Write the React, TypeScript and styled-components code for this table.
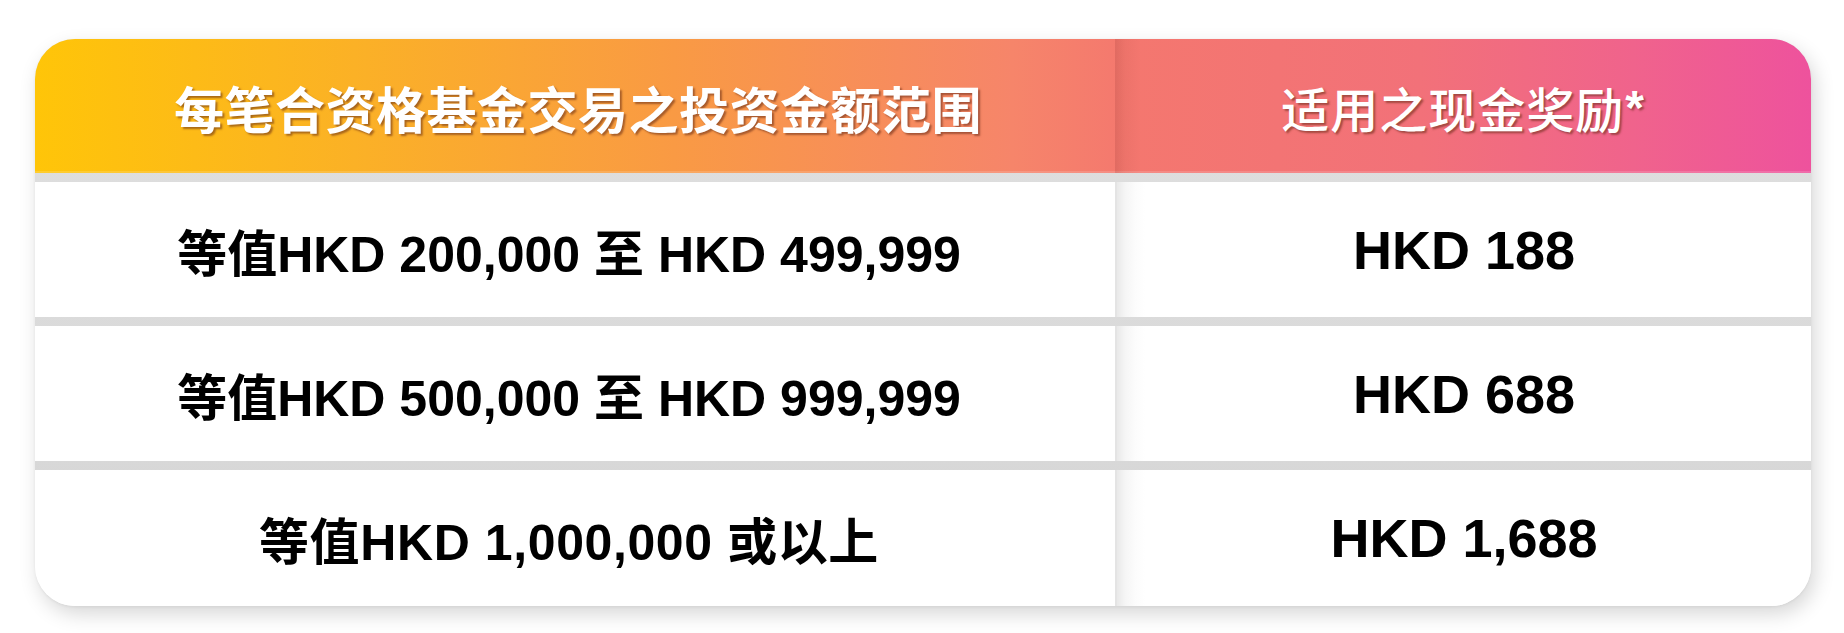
import React from 'react';
import { createGlobalStyle, styled } from 'styled-components';

const GlobalStyle = createGlobalStyle`
  html, body {
    margin: 0;
    padding: 0;
    background: #ffffff;
  }
  body {
    font-family: 'Liberation Sans', 'Noto Sans CJK SC', sans-serif;
  }
`;

const Page = styled.div`
  padding: 39px 33px 27px 35px;
`;

const Card = styled.div`
  width: 1776px;
  display: flex;
  flex-direction: column;
  gap: 9px;
  border-radius: 40px;
  overflow: hidden;
  background: linear-gradient(180deg, #e0e0e0 0%, #d5d5d5 100%);
  box-shadow: 4px 8px 20px rgba(0, 0, 0, 0.16), 0 1px 3px rgba(0, 0, 0, 0.06);
`;

const HeaderRow = styled.div`
  display: grid;
  grid-template-columns: 1080px 696px;
  height: 134px;
  background: linear-gradient(
    90deg,
    #ffc508 0%,
    #fbb126 18%,
    #f99a44 36%,
    #f6856a 55%,
    #f4776f 62%,
    #f27179 78%,
    #f0638c 90%,
    #ee529d 100%
  );
  box-shadow: inset 0 -2px 0 rgba(255, 255, 255, 0.15);
`;

const HeaderCell = styled.div<{ $divided?: boolean; $light?: boolean }>`
  display: flex;
  align-items: center;
  justify-content: center;
  padding-top: 2px;
  padding-left: ${({ $light }) => ($light ? '0' : '6px')};
  color: #ffffff;
  font-family: 'Noto Sans CJK SC', 'Liberation Sans', sans-serif;
  font-size: ${({ $light }) => ($light ? '48px' : '50px')};
  font-weight: ${({ $light }) => ($light ? 500 : 700)};
  letter-spacing: ${({ $light }) => ($light ? '1px' : '0.5px')};
  text-shadow: 2px 2px 2px rgba(100, 40, 20, 0.55);
  background: ${({ $divided }) =>
    $divided
      ? 'linear-gradient(90deg, rgba(120, 30, 30, 0.16) 0px, rgba(120, 30, 30, 0.06) 10px, rgba(120, 30, 30, 0) 26px)'
      : 'none'};
`;

const Star = styled.span`
  font-family: 'Liberation Sans', sans-serif;
  font-weight: 700;
  margin-left: 1px;
`;

const BodyRow = styled.div<{ $tall?: boolean }>`
  display: grid;
  grid-template-columns: 1080px 696px;
  height: ${({ $tall }) => ($tall ? '136px' : '135px')};
  background: #ffffff;
  box-shadow: inset 0 1px 0 #f2f2f2;
`;

const BodyCell = styled.div<{ $divided?: boolean; $amount?: boolean; $wide?: boolean }>`
  display: flex;
  align-items: center;
  justify-content: center;
  padding-right: ${({ $amount }) => ($amount ? '0' : '12px')};
  color: #000000;
  font-size: ${({ $amount }) => ($amount ? '54px' : '50px')};
  font-weight: 700;
  letter-spacing: ${({ $wide }) => ($wide ? '0.6px' : '0')};
  white-space: pre;
  border-left: ${({ $divided }) => ($divided ? '2px solid #e4e4e4' : 'none')};
  background: ${({ $divided }) =>
    $divided
      ? 'linear-gradient(90deg, #e9e9e9 0px, #f5f5f5 8px, #fcfcfc 18px, #ffffff 28px)'
      : '#ffffff'};
`;

const rows = [
  { range: '等值HKD 200,000 至 HKD 499,999', reward: 'HKD 188' },
  { range: '等值HKD 500,000 至 HKD 999,999', reward: 'HKD 688' },
  { range: '等值HKD 1,000,000 或以上', reward: 'HKD 1,688' },
];

export default function App() {
  return (
    <>
      <GlobalStyle />
      <Page>
        <Card>
          <HeaderRow>
            <HeaderCell>每笔合资格基金交易之投资金额范围</HeaderCell>
            <HeaderCell $divided $light>
              适用之现金奖励<Star>*</Star>
            </HeaderCell>
          </HeaderRow>
          {rows.map((row, i) => {
            const last = i === rows.length - 1;
            return (
              <BodyRow key={row.reward} $tall={last}>
                <BodyCell $wide={last}>{row.range}</BodyCell>
                <BodyCell $divided $amount>
                  {row.reward}
                </BodyCell>
              </BodyRow>
            );
          })}
        </Card>
      </Page>
    </>
  );
}
